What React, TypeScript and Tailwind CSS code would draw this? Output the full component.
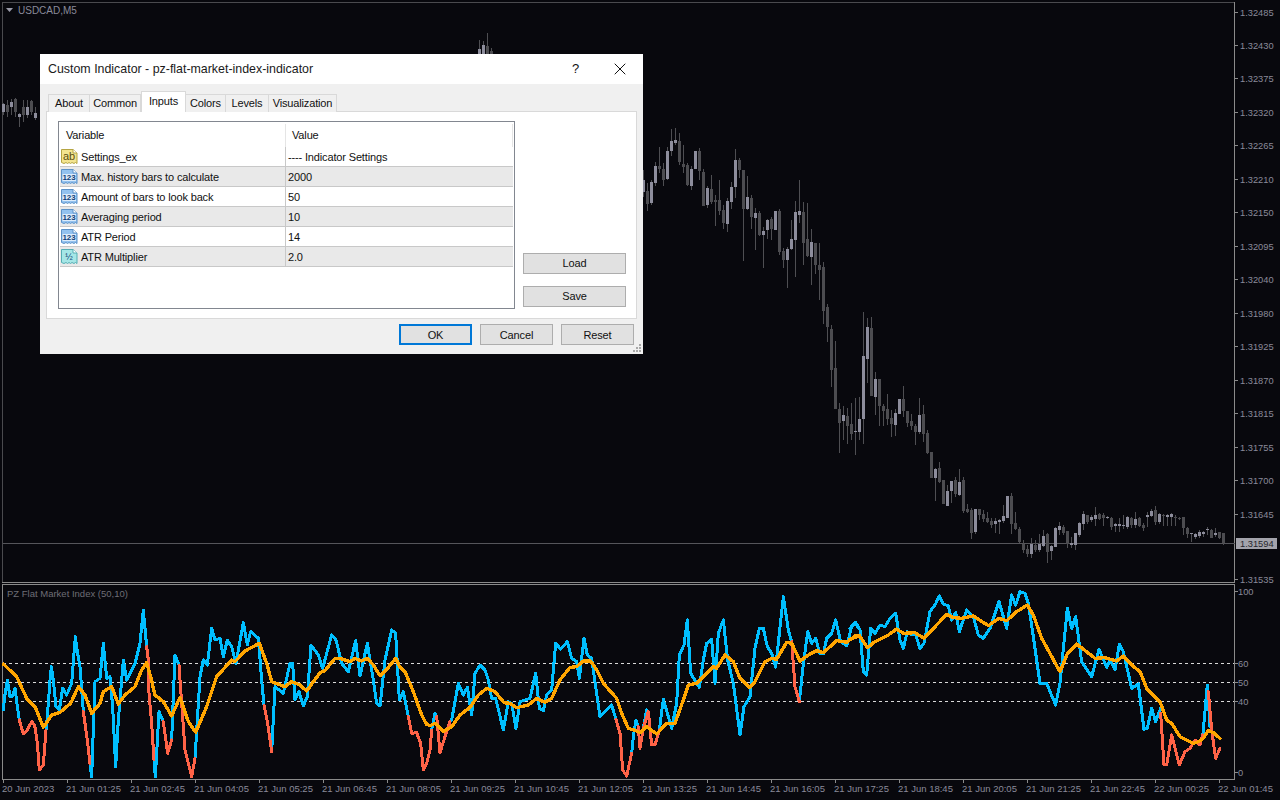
import { X } from 'lucide-react';

// chart data is read off the picture at 3x: [x, wickTop, wickBottom, bodyTop, bodyBottom, up]
type Candle = number[];

const leftCandles: Candle[] = [
  [10, 310, 345, 312, 335, 1], [22, 300, 350, 315, 335, 0], [34, 297, 345, 305, 320, 1],
  [46, 295, 350, 297, 335, 0], [58, 340, 380, 342, 352, 1], [70, 300, 365, 320, 345, 0],
  [82, 300, 355, 320, 345, 1], [94, 300, 345, 302, 335, 0], [106, 320, 360, 338, 355, 1],
];

const topCandles: Candle[] = [
  [44, 45, 96, 72, 96, 1], [55, 48, 96, 60, 96, 1], [67, 24, 96, 62, 96, 0], [79, 70, 96, 78, 96, 0],
];

const midCandles: Candle[] = [
  [10, 150, 230, 180, 215, 1], [22, 190, 272, 213, 252, 0], [34, 180, 255, 186, 249, 1], [46, 125, 197, 138, 189, 1],
  [58, 82, 158, 138, 147, 0], [70, 130, 197, 147, 180, 0], [82, 82, 180, 93, 177, 1], [94, 27, 108, 63, 93, 1],
  [106, 25, 75, 60, 69, 1], [118, 40, 135, 63, 126, 0], [130, 75, 158, 132, 141, 0], [142, 130, 198, 135, 195, 0],
  [154, 137, 210, 147, 198, 1], [166, 93, 147, 93, 147, 1], [178, 85, 180, 93, 153, 0], [190, 148, 258, 156, 258, 0],
  [202, 198, 265, 204, 255, 1], [214, 165, 252, 207, 246, 0], [226, 225, 318, 240, 246, 0], [238, 180, 285, 240, 273, 0],
  [250, 255, 327, 270, 309, 0], [262, 235, 335, 243, 312, 1], [274, 186, 267, 201, 246, 1], [286, 87, 234, 120, 201, 1],
  [298, 115, 175, 120, 150, 0], [310, 150, 422, 150, 267, 0], [322, 168, 270, 231, 267, 1], [334, 226, 327, 234, 291, 0],
  [346, 265, 390, 279, 294, 1], [358, 273, 348, 279, 345, 0], [370, 322, 443, 333, 345, 1], [382, 298, 357, 300, 330, 1],
  [394, 292, 360, 297, 327, 0], [406, 273, 330, 273, 330, 1], [418, 268, 405, 273, 396, 0], [430, 385, 443, 393, 420, 0],
  [442, 380, 503, 387, 420, 1], [454, 300, 390, 357, 387, 1], [466, 243, 470, 276, 360, 1], [478, 180, 310, 273, 285, 1],
  [490, 247, 435, 276, 369, 0], [502, 250, 410, 357, 408, 0], [514, 327, 495, 366, 411, 1], [526, 370, 462, 369, 435, 0],
  [538, 370, 540, 435, 450, 0], [550, 427, 612, 441, 573, 0], [562, 553, 665, 561, 621, 0], [574, 615, 800, 627, 750, 0],
  [586, 663, 867, 744, 867, 0], [598, 850, 1000, 867, 909, 0], [610, 858, 960, 885, 903, 1], [622, 865, 972, 888, 918, 0],
  [634, 850, 960, 912, 942, 0], [646, 835, 1005, 933, 936, 1], [658, 830, 960, 897, 936, 1], [670, 576, 972, 708, 897, 1],
  [682, 595, 790, 621, 717, 1], [694, 590, 828, 624, 828, 0], [706, 755, 885, 777, 831, 1], [718, 777, 918, 777, 858, 0],
  [730, 852, 918, 858, 873, 0], [742, 822, 915, 867, 897, 0], [754, 870, 950, 894, 912, 0], [766, 867, 948, 879, 915, 1],
  [778, 837, 882, 837, 882, 1], [790, 798, 890, 837, 873, 0], [802, 873, 922, 873, 909, 0], [814, 882, 930, 903, 918, 0],
  [826, 912, 975, 918, 936, 0], [838, 835, 942, 885, 936, 1], [850, 855, 965, 882, 942, 0],
];

const lowCandles: Candle[] = [
  [22, 30, 102, 40, 100, 0], [34, 95, 175, 97, 175, 0], [46, 145, 242, 147, 175, 1], [58, 125, 190, 145, 187, 0],
  [70, 180, 252, 180, 252, 0], [82, 195, 258, 213, 258, 1], [94, 183, 250, 183, 213, 1], [106, 172, 232, 180, 222, 0],
  [118, 148, 228, 186, 225, 1], [130, 170, 280, 180, 273, 0], [142, 252, 280, 267, 276, 0], [154, 265, 357, 270, 339, 0],
  [166, 267, 342, 267, 336, 1], [178, 267, 300, 267, 285, 0], [190, 270, 305, 282, 297, 0], [202, 275, 310, 294, 306, 0],
  [214, 295, 325, 303, 315, 0], [226, 295, 340, 303, 312, 1], [238, 298, 342, 300, 306, 1], [250, 255, 310, 288, 303, 1],
  [262, 228, 295, 228, 294, 1], [274, 220, 342, 228, 312, 0], [286, 276, 330, 309, 327, 0], [298, 320, 370, 327, 366, 0],
  [310, 360, 400, 372, 390, 0], [322, 375, 410, 387, 402, 0], [334, 355, 415, 372, 402, 1], [346, 360, 395, 375, 390, 0],
  [358, 342, 395, 372, 390, 1], [370, 330, 380, 348, 378, 1], [382, 340, 428, 342, 396, 0], [394, 375, 420, 378, 393, 1],
  [406, 320, 382, 324, 381, 1], [418, 305, 345, 318, 330, 1], [430, 315, 345, 321, 339, 0], [442, 332, 385, 333, 372, 0],
  [454, 350, 385, 369, 375, 1], [466, 338, 390, 339, 375, 1], [478, 305, 350, 309, 345, 1], [490, 272, 330, 282, 312, 1],
  [502, 285, 312, 285, 306, 0], [514, 285, 305, 291, 300, 1], [526, 262, 318, 285, 297, 1], [538, 280, 300, 282, 297, 0],
  [550, 280, 318, 285, 294, 0], [562, 288, 297, 292, 294, 1], [574, 290, 330, 294, 321, 0], [586, 310, 335, 312, 318, 1],
  [598, 295, 335, 312, 318, 1], [610, 285, 328, 315, 318, 1], [622, 288, 328, 291, 321, 1], [634, 290, 325, 294, 315, 0],
  [646, 275, 325, 297, 315, 1], [658, 290, 320, 294, 318, 0], [670, 310, 332, 315, 324, 0], [682, 275, 320, 285, 291, 1],
  [694, 268, 290, 273, 288, 1], [706, 258, 315, 270, 306, 0], [718, 280, 312, 282, 306, 1], [730, 282, 318, 285, 288, 0],
  [742, 282, 318, 285, 291, 1], [754, 280, 318, 282, 291, 1], [766, 286, 318, 291, 294, 0], [778, 292, 300, 294, 296, 0],
  [790, 292, 345, 291, 324, 0], [802, 322, 355, 324, 342, 0], [814, 338, 366, 340, 342, 1], [826, 340, 358, 342, 351, 1],
  [838, 330, 355, 336, 348, 1], [850, 333, 350, 336, 342, 1], [862, 322, 345, 327, 330, 1], [874, 328, 355, 330, 354, 0],
  [886, 325, 350, 339, 345, 1], [898, 335, 356, 336, 354, 0], [910, 338, 376, 340, 370, 0],
];

const priceLabels = [
  ['1.32485', 12], ['1.32430', 45], ['1.32375', 78], ['1.32320', 112], ['1.32265', 145], ['1.32210', 179],
  ['1.32150', 212], ['1.32095', 246], ['1.32040', 279], ['1.31980', 313], ['1.31925', 346], ['1.31870', 380],
  ['1.31815', 413], ['1.31755', 447], ['1.31700', 480], ['1.31645', 514], ['1.31535', 579],
] as const;

const timeLabels = [
  '20 Jun 2023', '21 Jun 01:25', '21 Jun 02:45', '21 Jun 04:05', '21 Jun 05:25', '21 Jun 06:45', '21 Jun 08:05',
  '21 Jun 09:25', '21 Jun 10:45', '21 Jun 12:05', '21 Jun 13:25', '21 Jun 14:45', '21 Jun 16:05', '21 Jun 17:25',
  '21 Jun 18:45', '21 Jun 20:05', '21 Jun 21:25', '21 Jun 22:45', '22 Jun 00:25', '22 Jun 01:45',
];

const indexLabels = [['100', 591], ['60', 663], ['50', 682], ['40', 701], ['0', 772]] as const;

// indicator lines, one group per 430px stretch of the pane
const stretches = [
  {
    x: 0,
    blue: [
      '10,390 14,350 22,300 30,350 36,350 45,325 52,380 58,420',
      '138,450 142,410 150,300 154,260 160,300 168,380 178,390 188,325 200,345 215,310 226,170 232,215 240,260 250,395',
      '270,550 275,590 285,305 300,295 310,190 320,295 330,290 338,380 347,560 355,420 370,240 380,300 405,250 420,190 430,90 440,200',
      '462,540 466,590 477,395 490,425',
      '515,480 525,225 537,255',
      '585,535 600,290 610,240 622,255 635,145 645,180 660,175 670,230 682,180 695,200 708,250 730,128 742,195 752,155 775,175 785,300 792,375',
      '815,515 825,320 850,340 870,250 878,250 885,360 897,335 910,378 922,350 933,195 955,225 968,265 995,165 1008,180 1025,250 1045,275 1067,182 1080,288 1102,190 1120,300 1130,370 1140,378 1155,240 1175,150 1187,160 1198,360 1210,335 1225,410',
    ],
    red: [
      '58,420 70,462 82,450 95,425 104,435 112,490 118,570 130,555 138,450',
      '250,395 262,480 270,550',
      '440,200 445,240 447,340 455,430 462,540',
      '490,425 503,520 515,480',
      '537,255 545,370 555,510 575,590 585,535',
      '792,375 803,430 815,515',
      '1225,410 1235,460 1250,458 1262,490 1270,570 1280,550 1290,510',
    ],
    orange:
      '10,252 50,290 80,355 105,380 130,442 155,405 180,397 212,370 235,320 255,345 275,400 300,370 310,335 335,320 355,372 375,345 405,320 425,270 440,248 452,290 465,345 490,365 515,408 540,352 565,425 587,457 620,380 650,290 695,240 705,245 735,213 778,190 800,250 815,305 855,320 875,305 900,315 920,333 960,278 975,272 1005,235 1020,235 1050,245 1065,235 1085,243 1102,235 1120,255 1140,287 1165,262 1187,235 1200,262 1215,275 1240,335 1265,405 1280,433 1290,437',
  },
  {
    x: 430,
    blue: [
      '5,450 15,400 20,410',
      '60,425 65,420 85,310 100,345 112,322 125,405 135,280 150,255 165,270 175,300 185,355 197,355 220,450 235,365 245,370 258,445 270,365 285,360 300,355 317,280 328,385 340,392 350,345 365,330 377,190 392,207 412,185 425,235 440,245 448,295 462,175 472,225 485,235 497,320 510,410 545,375 558,418',
      '605,520 610,470 618,420 625,440',
      '655,395 650,390 640,445',
      '688,450 700,358 725,445 740,370 748,225 762,195 772,120 782,280 808,322 820,240 830,190 845,178 855,310 865,160 880,120 893,240 910,310 930,465 942,380 960,350 975,205 988,145 1000,145 1012,200 1025,220 1037,262 1060,50 1075,150 1085,185',
      '1108,365 1118,270 1133,155 1145,190 1157,175 1170,222 1180,222 1190,175 1205,160 1217,120 1232,185 1250,197 1265,140 1277,127 1290,150',
    ],
    red: [
      '0,510 5,450',
      '20,410 30,518 45,470 60,425',
      '558,418 570,460 578,570 590,588 605,520',
      '625,440 630,505 640,445 655,395 665,495 675,495 688,450',
      '1085,185 1095,320 1108,365',
    ],
    orange:
      '0,437 15,430 40,455 65,440 90,405 120,382 145,345 170,325 195,335 222,368 240,370 260,383 295,375 320,355 345,367 365,355 390,300 420,262 440,260 460,243 482,243 500,270 520,310 560,355 575,400 595,445 612,450 630,458 650,440 680,462 710,430 735,430 760,360 775,315 800,310 850,260 860,265 885,225 910,245 930,295 960,323 975,305 1005,245 1025,235 1040,238 1070,187 1085,190 1110,243 1135,225 1160,212 1180,218 1220,182 1250,187 1275,168 1290,168',
  },
  {
    x: 850,
    blue: [
      '0,145 15,128 30,150 40,275 50,285 62,145 75,160 90,135 105,140 120,115 137,100 150,180 160,205 172,155 185,165 197,165 210,205 222,190 240,95 255,75 268,48 280,72 295,78 305,120 317,98 328,155 350,90 370,110 385,165 400,175 420,145 447,65 470,145 485,45 497,75 510,35 525,40 535,70 550,170 570,310 590,310 617,375 630,310 652,85 665,145 677,110 695,245 725,290 747,208 770,262 780,240 795,270 808,193 820,215 845,325 865,312 882,448 892,445 905,385 917,425 932,385',
      '1058,470 1072,315 1080,440',
    ],
    red: ['932,400 942,555 950,555 965,465 988,555 1005,515 1020,505 1035,480 1050,495 1058,465', '1075,335 1085,450 1097,535 1110,505'],
    orange:
      '0,178 28,167 52,203 75,185 115,165 140,147 160,160 195,158 222,175 290,103 310,113 335,115 370,108 415,137 447,115 470,122 500,95 532,75 550,105 575,175 630,275 652,222 680,192 735,235 765,233 800,243 820,228 845,255 870,275 890,325 930,365 950,420 965,430 990,470 1030,490 1045,485 1060,475 1075,452 1090,458 1110,475',
  },
];

const params = [
  { name: 'Settings_ex', value: '---- Indicator Settings', kind: 'ab' },
  { name: 'Max. history bars to calculate', value: '2000', kind: '123' },
  { name: 'Amount of bars to look back', value: '50', kind: '123' },
  { name: 'Averaging period', value: '10', kind: '123' },
  { name: 'ATR Period', value: '14', kind: '123' },
  { name: 'ATR Multiplier', value: '2.0', kind: 'half' },
];

const tabs = [
  { label: 'About', width: 'w-[42px] border-l' },
  { label: 'Common', width: 'w-[51px]' },
  { label: 'Inputs', width: 'w-[45px]' },
  { label: 'Colors', width: 'w-[40px]' },
  { label: 'Levels', width: 'w-[43px]' },
  { label: 'Visualization', width: 'w-[68px]' },
];

function Candles({ data, x, y }: { data: Candle[]; x: number; y: number }) {
  return (
    <g shapeRendering="crispEdges">
      {data.map(([cx, wt, wb, bt, bb, up]) => {
        const px = Math.floor(x + cx / 3);
        return (
          <g key={cx}>
            <rect x={px} y={y + wt / 3} width={1} height={(wb - wt) / 3} fill="#4e4e52" />
            <rect x={px - 1} y={y + bt / 3} width={3} height={Math.max((bb - bt) / 3, 1)} fill={up ? '#8d8d9c' : '#4c4c50'} />
          </g>
        );
      })}
    </g>
  );
}

function ParamIcon({ kind }: { kind: string }) {
  const fill = kind === 'ab' ? '#f3e48f' : kind === 'half' ? '#a5e6e6' : '#93c2ef';
  const stroke = kind === 'ab' ? '#b5a543' : kind === 'half' ? '#55aeb4' : '#5c92c8';
  const ink = kind === 'ab' ? '#5a4d10' : '#0f3f78';
  return (
    <svg width="17" height="17" viewBox="0 0 17 17" className="shrink-0">
      <path
        d="M0.5 1.5H12L16 5V15.5L14.5 14.5L13 15.5L11 14.5L9.5 15.5L8 14.5L6.5 15.5L5 14.5L3 15.5L0.5 14.5Z"
        fill={fill}
        stroke={stroke}
      />
      <path d="M12 1.5V5H16" fill="#ffffff" stroke={stroke} />
      {kind === '123' && <rect x="1.5" y="6" width="13.5" height="7" fill="#dcecfb" />}
      <text
        x="8"
        y={kind === '123' ? 12 : 12}
        textAnchor="middle"
        fontSize={kind === '123' ? 8 : kind === 'ab' ? 11 : 9}
        fontWeight={kind === '123' ? 700 : 400}
        fill={ink}
        fontFamily="'Liberation Sans', sans-serif"
      >
        {kind === 'ab' ? 'ab' : kind === 'half' ? '½' : '123'}
      </text>
    </svg>
  );
}

function DialogButton({ label, primary }: { label: string; primary?: boolean }) {
  return (
    <button
      className={`h-[21px] w-[73px] bg-[#e1e1e1] pt-px text-[#111] ${primary ? 'border-2 border-[#0078d7]' : 'border border-[#adadad]'}`}
    >
      {label}
    </button>
  );
}

function SideButton({ label }: { label: string }) {
  return <button className="h-[21px] w-[103px] border border-[#adadad] bg-[#e1e1e1] text-[#111]">{label}</button>;
}

function Dialog() {
  return (
    <div className="absolute left-[40px] top-[54px] flex h-[300px] w-[603px] flex-col bg-[#f0f0f0] text-[11px] tracking-[-0.15px] text-[#111]">
      <div className="flex h-[30px] items-center justify-between bg-white pl-[8px] pr-[13px]">
        <span className="text-[12.4px] tracking-normal text-[#1a1a1a]">Custom Indicator - pz-flat-market-index-indicator</span>
        <div className="flex items-center gap-[31px]">
          <span className="text-[13px]">?</span>
          <X size={20} strokeWidth={1.2} color="#111" />
        </div>
      </div>

      <div className="relative z-10 -mb-px flex h-[28px] items-end pl-[8px]">
        {tabs.map((tab) =>
          tab.label === 'Inputs' ? (
            <div
              key={tab.label}
              className={`${tab.width} flex h-[21px] justify-center border-x border-t border-[#d9d9d9] bg-white pt-[1px]`}
            >
              {tab.label}
            </div>
          ) : (
            <div
              key={tab.label}
              className={`${tab.width} flex h-[18px] items-center justify-center border-r border-t border-[#d9d9d9] bg-[#f0f0f0]`}
            >
              {tab.label}
            </div>
          ),
        )}
      </div>

      <div className="mx-[6px] flex h-[208px] gap-[8px] border border-[#d9d9d9] bg-white pl-[11px] pt-[9px]">
        <div className="flex h-[188px] w-[457px] flex-col border border-[#828790] pl-px pr-px">
          <div className="flex h-[25px] shrink-0 items-center pt-[2px]">
            <div className="flex h-full w-[225px] items-center pl-[6px]">Variable</div>
            <div className="flex h-full flex-1 items-center border-x border-[#e5e5e5] pl-[6px]">Value</div>
          </div>
          {params.map((p, i) => (
            <div
              key={p.name}
              className={`flex h-[20px] shrink-0 border-b border-[#c8c8c8] ${i % 2 === 1 ? 'bg-[#e9e9e9]' : 'bg-white'}`}
            >
              <div className="flex w-[225px] items-center gap-[3px] pl-px">
                <ParamIcon kind={p.kind} />
                <span className="pt-[2px]">{p.name}</span>
              </div>
              <div className="flex flex-1 items-center border-l border-[#c8c8c8] pl-[2px] pt-[2px]">{p.value}</div>
            </div>
          ))}
        </div>
        <div className="flex flex-col justify-end gap-[12px] pb-[11px]">
          <SideButton label="Load" />
          <SideButton label="Save" />
        </div>
      </div>

      <div className="relative flex flex-1 justify-end gap-[8px] pr-[9px] pt-[5px]">
        <DialogButton label="OK" primary />
        <DialogButton label="Cancel" />
        <DialogButton label="Reset" />
        <svg width="9" height="9" viewBox="0 0 9 9" className="absolute bottom-[1px] right-[1px]" fill="#a8a8a8">
          <rect x="6" y="0" width="2" height="2" />
          <rect x="3" y="3" width="2" height="2" />
          <rect x="6" y="3" width="2" height="2" />
          <rect x="0" y="6" width="2" height="2" />
          <rect x="3" y="6" width="2" height="2" />
          <rect x="6" y="6" width="2" height="2" />
        </svg>
      </div>
    </div>
  );
}

export default function App() {
  const axisFont = { fontSize: 9.3, fill: '#8a8a9a' };
  return (
    <div className="relative flex h-[800px] w-[1280px] flex-col overflow-hidden bg-[#08080d] font-['Liberation_Sans',sans-serif]">
      {/* price pane */}
      <svg className="block h-[583px] w-[1280px] shrink-0" viewBox="0 0 1280 583">
        <g shapeRendering="crispEdges">
          <rect x="2" y="2" width="1233" height="1" fill="#4a4a4e" />
          <rect x="2" y="2" width="1" height="581" fill="#4a4a4e" />
          <rect x="1234" y="2" width="1" height="581" fill="#8a8a8a" />
          <rect x="2" y="582" width="1233" height="1" fill="#8a8a8a" />
          <rect x="3" y="543" width="1232" height="1" fill="#55555a" />
          {priceLabels.map(([, y]) => (
            <rect key={y} x="1235" y={y} width="3" height="1" fill="#8a8a8a" />
          ))}
        </g>
        <Candles data={leftCandles} x={0} y={0} />
        <Candles data={topCandles} x={465} y={25} />
        <Candles data={midCandles} x={640} y={120} />
        <Candles data={lowCandles} x={920} y={420} />
        <path d="M6 8H13L9.5 12Z" fill="#9a9aa8" />
        <text x="18" y="14" fontSize={10} fill="#8a8a9a">
          USDCAD,M5
        </text>
        {priceLabels.map(([label, y]) => (
          <text key={label} x="1240" y={y + 3.5} {...axisFont}>
            {label}
          </text>
        ))}
        <rect x="1236" y="538" width="41" height="11" fill="#a3a3ab" />
        <text x="1240" y="547" fontSize={9.3} fill="#26262c">
          1.31594
        </text>
      </svg>

      {/* indicator pane with the time axis */}
      <svg className="block h-[217px] w-[1280px] shrink-0" viewBox="0 583 1280 217">
        <g shapeRendering="crispEdges">
          <rect x="2" y="584" width="1233" height="1" fill="#8a8a8a" />
          <rect x="2" y="584" width="1" height="196" fill="#8a8a8a" />
          <rect x="1234" y="584" width="1" height="196" fill="#8a8a8a" />
          <rect x="2" y="779" width="1233" height="1" fill="#8a8a8a" />
          {timeLabels.map((label, i) => (
            <rect key={label} x={3 + i * 64} y="780" width="1" height="3" fill="#8a8a8a" />
          ))}
          {[663, 682, 701].map((y) => (
            <line key={y} x1="3" x2="1234" y1={y + 0.5} y2={y + 0.5} stroke="#d8d8d8" strokeDasharray="3 3" />
          ))}
          {indexLabels.map(([label, y]) => (
            <rect key={label} x="1235" y={y} width="3" height="1" fill="#8a8a8a" />
          ))}
        </g>
        <g fill="none" strokeLinejoin="round" strokeLinecap="round" shapeRendering="crispEdges">
          {stretches.map((s) => (
            <g key={s.x} transform={`translate(${s.x} 580) scale(0.33333)`}>
              {s.blue.map((pts) => (
                <polyline key={pts} points={pts} stroke="#00bfff" strokeWidth="9" />
              ))}
              {s.red.map((pts) => (
                <polyline key={pts} points={pts} stroke="#ff6347" strokeWidth="9" />
              ))}
            </g>
          ))}
          {stretches.map((s) => (
            <g key={s.x} transform={`translate(${s.x} 580) scale(0.33333)`}>
              <polyline points={s.orange} stroke="#ffa500" strokeWidth="10" />
            </g>
          ))}
        </g>
        <text x="7" y="597" fontSize={9.5} fill="#6e6e76">
          PZ Flat Market Index (50,10)
        </text>
        {indexLabels.map(([label, y]) => (
          <text key={label} x="1238" y={y + 3.5} {...axisFont}>
            {label}
          </text>
        ))}
        {timeLabels.map((label, i) => (
          <text key={label} x={2 + i * 64} y="792" fontSize={9.5} fill="#8a8a9a">
            {label}
          </text>
        ))}
      </svg>

      <Dialog />
    </div>
  );
}
